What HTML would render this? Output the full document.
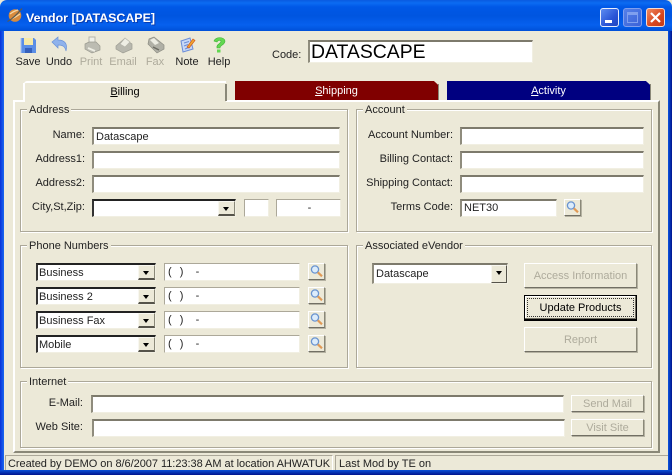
<!DOCTYPE html>
<html><head><meta charset="utf-8"><style>
html,body{margin:0;padding:0;background:#ece9d8}
#w{position:relative;width:672px;height:475px;overflow:hidden;background:#ece9d8;font:11px "Liberation Sans",sans-serif;color:#222}
#w div,#w svg{position:absolute}
.t{white-space:nowrap;line-height:13px}
.r{text-align:right}
.c{text-align:center}
.g{border:1px solid #aca899;box-shadow:1px 1px 0 #fff,inset 1px 1px 0 #fff}
.l{background:#ece9d8;padding:0 2px;line-height:13px;white-space:nowrap}
.i{background:#fff;box-sizing:border-box;border-top:2px solid #7d7a6c;border-left:2px solid #8f8c7d;border-right:1px solid #f1efe2;border-bottom:1px solid #f1efe2;line-height:16px;padding-left:2px;white-space:nowrap}
.p{border-width:1px;border-left-color:#aca899;border-top-color:#aca899;padding-left:3px;word-spacing:1px;line-height:17px}
.cb{background:#fff;box-sizing:border-box;border-top:2px solid #222;border-left:2px solid #333;border-right:1px solid #f1efe2;border-bottom:1px solid #f1efe2;line-height:16px;padding-left:1px;white-space:nowrap}
.ar{background:#ece9d8;box-sizing:border-box;border-top:1px solid #f8f7f0;border-left:1px solid #f8f7f0;border-right:1px solid #8a8878;border-bottom:2px solid #55534a}
.ar:after{content:"";position:absolute;left:4px;top:5px;border-left:3.5px solid transparent;border-right:3.5px solid transparent;border-top:4px solid #000}
.b{box-sizing:border-box;background:#ece9d8;border:1px solid;border-color:#fff #8a8878 #716f64 #fff;box-shadow:1px 1px 0 #b5b2a2;text-align:center;white-space:nowrap}
.dg{color:#aeab9c}
</style></head><body><div id="w">

<!-- window frame -->
<div style="left:0;top:0;width:672px;height:31px;border-radius:7px 7px 0 0;background:linear-gradient(180deg,#0a5ae0 0,#0b6cf2 3px,#0058e6 7px,#0055e0 16px,#0660ee 25px,#0050d8 31px)"></div>
<div style="left:0;top:31px;width:4px;height:444px;background:linear-gradient(90deg,#0831d9,#1a68f0)"></div>
<div style="left:668px;top:31px;width:4px;height:444px;background:linear-gradient(90deg,#0a55e0,#00138c)"></div>
<div style="left:0;top:470px;width:672px;height:5px;background:linear-gradient(180deg,#0a50d8,#00138c)"></div>

<!-- title -->
<svg style="left:6px;top:6px" width="18" height="18" viewBox="0 0 18 18"><circle cx="9" cy="9.5" r="6.3" fill="#d88a3c"/><path d="M4 8 Q8 5 12 4M5 13 Q10 11 14 8" stroke="#f6d6a2" stroke-width="1.4" fill="none"/><path d="M1.5 15.5 Q8 12 16 2.5" stroke="#5a5a50" stroke-width="1.2" fill="none"/></svg>
<div class="t" style="left:26px;top:11px;color:#fff;font:bold 12.4px/15px 'Liberation Sans',sans-serif;text-shadow:1px 1px 0 #0a3cb0">Vendor [DATASCAPE]</div>

<!-- caption buttons -->
<div style="left:600px;top:8px;width:19px;height:19px;box-sizing:border-box;border:1px solid #e8eefc;border-radius:3px;background:linear-gradient(135deg,#5c8cf0,#2a55d6 60%,#2046c0)"></div>
<div style="left:605px;top:20px;width:7px;height:3px;background:#fff"></div>
<div style="left:623px;top:8px;width:19px;height:19px;box-sizing:border-box;border:1px solid #7f9fee;border-radius:3px;background:linear-gradient(135deg,#5580e8,#3a62d8)"></div>
<div style="left:627px;top:12px;width:11px;height:11px;box-sizing:border-box;border:1px solid #7f9fee;border-top:3px solid #7f9fee"></div>
<div style="left:646px;top:8px;width:19px;height:19px;box-sizing:border-box;border:1px solid #f4dcd2;border-radius:3px;background:linear-gradient(135deg,#ee8a60,#d8461e 60%,#c23a14)"></div>
<svg style="left:646px;top:8px" width="19" height="19"><path d="M5 5 L14 14M14 5 L5 14" stroke="#fff" stroke-width="2.2"/></svg>

<!-- toolbar icons -->
<svg style="left:19px;top:36px" width="18" height="18" viewBox="0 0 18 18"><path d="M2 2H15L17 4V17H2Z" fill="#5b8ee6"/><rect x="5" y="2" width="9" height="7" fill="#f6e9a8"/><rect x="6" y="12" width="7" height="5" fill="#3560bc"/><path d="M2 2V17" stroke="#a8c4f2"/></svg>
<svg style="left:51px;top:36px" width="18" height="18" viewBox="0 0 18 18"><path d="M1 6L7 1V4C13 4 17 7 15 15C14 10 11 9 7 9V12Z" fill="#8fb2ec" stroke="#6a92d8" stroke-width=".7"/></svg>
<svg style="left:83px;top:36px" width="18" height="18" viewBox="0 0 18 18"><path d="M6 1H12V7H6Z" fill="#f0f0e8" stroke="#b4b4aa"/><path d="M2 8L6 6H13L17 10V14L9 17L2 13Z" fill="#bcbcb2" stroke="#9a9a90" stroke-width=".7"/><path d="M5 12L12 15" stroke="#eeeee4" stroke-width="2"/></svg>
<svg style="left:115px;top:36px" width="18" height="18" viewBox="0 0 18 18"><path d="M1 10L9 3L17 8V13L8 17L1 13Z" fill="#b8b8ae" stroke="#9c9c92" stroke-width=".7"/><path d="M5 8L10 2L15 6L10 11Z" fill="#eeeee4" stroke="#b4b4aa" stroke-width=".7"/></svg>
<svg style="left:147px;top:36px" width="18" height="18" viewBox="0 0 18 18"><path d="M2 3L7 1L17 9V13L10 17L1 8Z" fill="#b0b0a6" stroke="#8c8c82" stroke-width=".7"/><path d="M3 4L7 2L12 7L8 9Z" fill="#ecece2"/><path d="M6 11L12 14" stroke="#6c6c64" stroke-width="1.5"/></svg>
<svg style="left:178px;top:36px" width="18" height="18" viewBox="0 0 18 18"><path d="M3 5L12 2L15 13L5 16Z" fill="#c8d8f6" stroke="#6a8cd8"/><path d="M6 7L11 5.5M6 10L10 8.5M7 13L12 11" stroke="#6a8cd8"/><path d="M9 11L15 3L17 4.5L11 12Z" fill="#f0a830" stroke="#d05a20" stroke-width=".7"/></svg>
<svg style="left:210px;top:36px" width="18" height="18" viewBox="0 0 18 18"><path d="M4 5C5 1 14 0 15 5C15 9 10 9 10 12H7C6 8 11 8 11 5C10 4 8 4 7 6Z" fill="#62d850" stroke="#40b038" stroke-width=".6"/><path d="M7 13.5H10.5V16.5H7Z" fill="#62d850"/></svg>

<div class="t c" style="left:12px;top:56px;width:32px">Save</div>
<div class="t c" style="left:43px;top:56px;width:32px">Undo</div>
<div class="t c dg" style="left:75px;top:56px;width:32px">Print</div>
<div class="t c dg" style="left:107px;top:56px;width:32px">Email</div>
<div class="t c dg" style="left:139px;top:56px;width:32px">Fax</div>
<div class="t c" style="left:171px;top:56px;width:32px">Note</div>
<div class="t c" style="left:203px;top:56px;width:32px">Help</div>

<div class="t" style="left:272px;top:49px">Code:</div>
<div class="i" style="left:308px;top:40px;width:225px;height:23px;font-size:19.4px;line-height:20px;padding-left:1px;color:#000">DATASCAPE</div>

<!-- tabs -->
<div style="left:235px;top:81px;width:203px;height:19px;background:#800000;clip-path:polygon(0 0,98% 0,100% 20%,100% 100%,0 100%)"></div>
<div style="left:438px;top:84px;width:1px;height:16px;background:#8a8878"></div>
<div class="t c" style="left:235px;top:85px;width:203px;color:#fff"><u>S</u>hipping</div>
<div style="left:447px;top:81px;width:203px;height:19px;background:#000080;clip-path:polygon(0 0,98% 0,100% 20%,100% 100%,0 100%)"></div>
<div style="left:650px;top:84px;width:1px;height:16px;background:#8a8878"></div>
<div class="t c" style="left:447px;top:85px;width:203px;color:#fff"><u>A</u>ctivity</div>

<!-- tab page -->
<div style="left:13px;top:100px;width:647px;height:353px;box-sizing:border-box;background:#ece9d8;border:2px solid;border-color:#fff #8a8878 #8a8878 #fff"></div>
<!-- billing tab -->
<div style="left:24px;top:81px;width:202px;height:22px;background:#ece9d8;border-top:2px solid #fff;border-radius:3px 0 0 0;box-sizing:border-box"></div>
<div style="left:23px;top:83px;width:2px;height:19px;background:#fff"></div>
<div style="left:13px;top:100px;width:12px;height:2px;background:#fff"></div>
<div style="left:225px;top:84px;width:2px;height:17px;background:#8a8878"></div>
<div class="t c" style="left:24px;top:86px;width:202px;color:#000"><u>B</u>illing</div>

<!-- Address -->
<div class="g" style="left:20px;top:109px;width:326px;height:121px"></div>
<div class="l" style="left:27px;top:104px">Address</div>
<div class="t r" style="left:20px;width:65px;top:129px">Name:</div>
<div class="t r" style="left:20px;width:65px;top:153px">Address1:</div>
<div class="t r" style="left:20px;width:65px;top:177px">Address2:</div>
<div class="t r" style="left:20px;width:65px;top:201px">City,St,Zip:</div>
<div class="i" style="left:92px;top:127px;width:248px;height:18px">Datascape</div>
<div class="i" style="left:92px;top:151px;width:248px;height:18px"></div>
<div class="i" style="left:92px;top:175px;width:248px;height:18px"></div>
<div class="cb" style="left:92px;top:199px;width:144px;height:18px"></div>
<div class="ar" style="left:218px;top:201px;width:17px;height:15px"></div>
<div class="i" style="left:244px;top:199px;width:25px;height:18px;border-color:#aca899 #f1efe2 #f1efe2 #aca899;border-width:1px"></div>
<div class="i" style="left:276px;top:199px;width:65px;height:18px;border-color:#aca899 #f1efe2 #f1efe2 #aca899;border-width:1px;text-align:center">-</div>

<!-- Account -->
<div class="g" style="left:356px;top:109px;width:294px;height:121px"></div>
<div class="l" style="left:363px;top:104px">Account</div>
<div class="t r" style="left:360px;width:93px;top:129px">Account Number:</div>
<div class="t r" style="left:360px;width:93px;top:153px">Billing Contact:</div>
<div class="t r" style="left:360px;width:93px;top:177px">Shipping Contact:</div>
<div class="t r" style="left:360px;width:93px;top:201px">Terms Code:</div>
<div class="i" style="left:460px;top:127px;width:184px;height:18px"></div>
<div class="i" style="left:460px;top:151px;width:184px;height:18px"></div>
<div class="i" style="left:460px;top:175px;width:184px;height:18px"></div>
<div class="i" style="left:460px;top:199px;width:97px;height:18px;line-height:15px">NET30</div>
<div class="b" style="left:564px;top:199px;width:17px;height:17px"></div>
<svg style="left:565px;top:200px" width="15" height="15"><circle cx="6" cy="5.5" r="3.6" fill="#dcecfb" stroke="#6a94d0" stroke-width="1.3"/><path d="M8.8 8.3L13 12.3" stroke="#e09a56" stroke-width="2.2"/></svg>

<!-- Phone -->
<div class="g" style="left:20px;top:245px;width:326px;height:121px"></div>
<div class="l" style="left:27px;top:240px">Phone Numbers</div>

<div class="cb" style="left:36px;top:263px;width:120px;height:18px">Business</div>
<div class="ar" style="left:138px;top:265px;width:17px;height:15px"></div>
<div class="i p" style="left:164px;top:263px;width:136px;height:18px">(&nbsp; )&nbsp;&nbsp; -</div>
<div class="b" style="left:308px;top:263px;width:17px;height:17px"></div>
<svg style="left:309px;top:264px" width="15" height="15"><circle cx="6" cy="5.5" r="3.6" fill="#dcecfb" stroke="#6a94d0" stroke-width="1.3"/><path d="M8.8 8.3L13 12.3" stroke="#e09a56" stroke-width="2.2"/></svg>

<div class="cb" style="left:36px;top:287px;width:120px;height:18px">Business 2</div>
<div class="ar" style="left:138px;top:289px;width:17px;height:15px"></div>
<div class="i p" style="left:164px;top:287px;width:136px;height:18px">(&nbsp; )&nbsp;&nbsp; -</div>
<div class="b" style="left:308px;top:287px;width:17px;height:17px"></div>
<svg style="left:309px;top:288px" width="15" height="15"><circle cx="6" cy="5.5" r="3.6" fill="#dcecfb" stroke="#6a94d0" stroke-width="1.3"/><path d="M8.8 8.3L13 12.3" stroke="#e09a56" stroke-width="2.2"/></svg>

<div class="cb" style="left:36px;top:311px;width:120px;height:18px">Business Fax</div>
<div class="ar" style="left:138px;top:313px;width:17px;height:15px"></div>
<div class="i p" style="left:164px;top:311px;width:136px;height:18px">(&nbsp; )&nbsp;&nbsp; -</div>
<div class="b" style="left:308px;top:311px;width:17px;height:17px"></div>
<svg style="left:309px;top:312px" width="15" height="15"><circle cx="6" cy="5.5" r="3.6" fill="#dcecfb" stroke="#6a94d0" stroke-width="1.3"/><path d="M8.8 8.3L13 12.3" stroke="#e09a56" stroke-width="2.2"/></svg>

<div class="cb" style="left:36px;top:335px;width:120px;height:18px">Mobile</div>
<div class="ar" style="left:138px;top:337px;width:17px;height:15px"></div>
<div class="i p" style="left:164px;top:335px;width:136px;height:18px">(&nbsp; )&nbsp;&nbsp; -</div>
<div class="b" style="left:308px;top:335px;width:17px;height:17px"></div>
<svg style="left:309px;top:336px" width="15" height="15"><circle cx="6" cy="5.5" r="3.6" fill="#dcecfb" stroke="#6a94d0" stroke-width="1.3"/><path d="M8.8 8.3L13 12.3" stroke="#e09a56" stroke-width="2.2"/></svg>

<!-- Associated eVendor -->
<div class="g" style="left:356px;top:245px;width:294px;height:121px"></div>
<div class="l" style="left:363px;top:240px">Associated eVendor</div>
<div class="cb" style="left:372px;top:263px;width:136px;height:21px;border-top-color:#7d7a6c;border-left-color:#8f8c7d;line-height:18px;padding-left:2px">Datascape</div>
<div class="ar" style="left:491px;top:265px;width:16px;height:18px;border-bottom-width:1px;border-right-color:#55534a"></div>
<div class="b dg" style="left:524px;top:263px;width:113px;height:25px;line-height:24px">Access Information</div>
<div class="b" style="left:524px;top:295px;width:113px;height:25px;line-height:24px;border:1px solid #000;box-shadow:inset -1px -1px 0 #716f64,inset 1px 1px 0 #fff,0 1px 0 #000;color:#000">Update Products</div>
<div style="left:527px;top:298px;width:107px;height:19px;box-sizing:border-box;border:1px dotted #333"></div>
<div class="b dg" style="left:524px;top:327px;width:113px;height:25px;line-height:24px">Report</div>

<!-- Internet -->
<div class="g" style="left:20px;top:381px;width:630px;height:65px"></div>
<div class="l" style="left:27px;top:376px">Internet</div>
<div class="t r" style="left:20px;width:63px;top:397px">E-Mail:</div>
<div class="t r" style="left:20px;width:63px;top:421px">Web Site:</div>
<div class="i" style="left:91px;top:395px;width:473px;height:18px"></div>
<div class="i" style="left:92px;top:419px;width:473px;height:18px"></div>
<div class="b dg" style="left:571px;top:395px;width:73px;height:17px;line-height:16px">Send Mail</div>
<div class="b dg" style="left:571px;top:419px;width:73px;height:17px;line-height:16px">Visit Site</div>

<!-- status bar -->
<div style="left:4px;top:453px;width:664px;height:17px;background:#ece9d8"></div>
<div style="left:5px;top:455px;width:328px;height:15px;box-sizing:border-box;border-top:1px solid #aca899;border-left:1px solid #aca899;border-right:1px solid #fff"></div>
<div style="left:335px;top:455px;width:333px;height:15px;box-sizing:border-box;border-top:1px solid #aca899;border-left:1px solid #aca899"></div>
<div class="t" style="left:8px;top:458px;letter-spacing:-.04px">Created by DEMO on 8/6/2007 11:23:38 AM at location AHWATUK</div>
<div class="t" style="left:339px;top:458px">Last Mod by TE on</div>

</div></body></html>
